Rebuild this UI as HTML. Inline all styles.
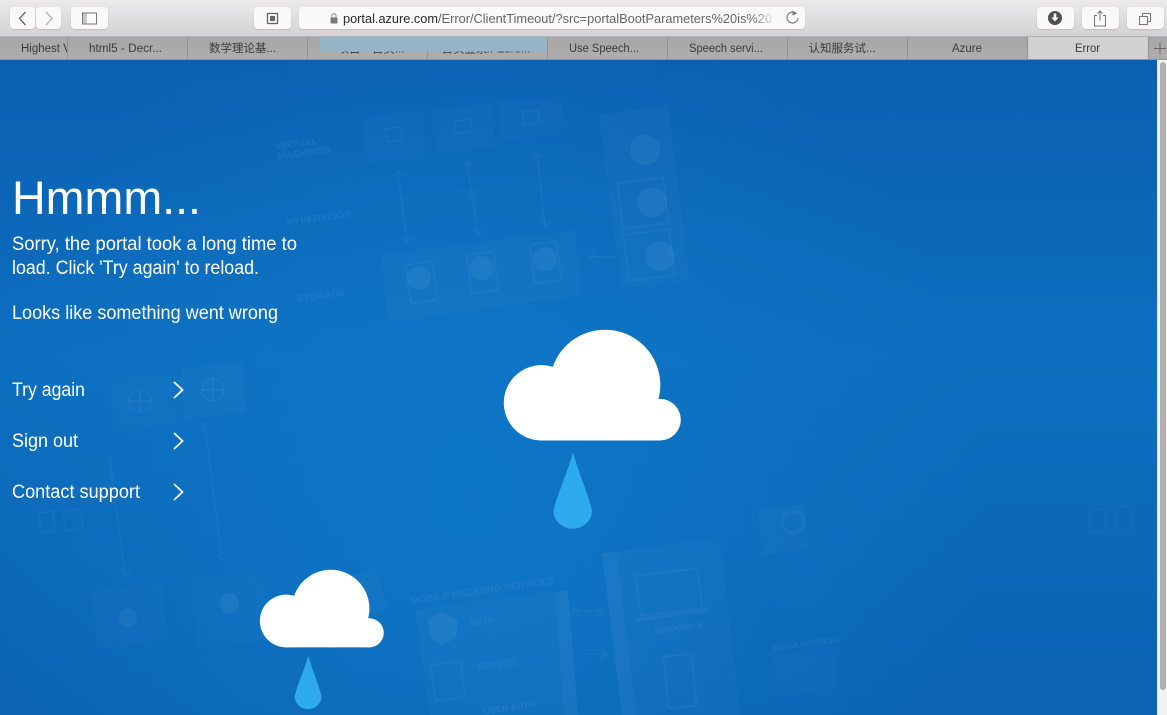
<!DOCTYPE html>
<html lang="en">
<head>
<meta charset="utf-8">
<title>Error</title>
<style>
html,body{margin:0;padding:0;width:1167px;height:715px;overflow:hidden;background:#f1f1f1}
svg{display:block}
text{font-family:"Liberation Sans","Noto Sans CJK SC",sans-serif}
.tab{font-size:11.500px;fill:#3c3c3c;text-anchor:middle}
.main{fill:#fff}
.art text{font-weight:bold;fill:#fff;opacity:.06}
</style>
</head>
<body>
<svg width="1167" height="715" viewBox="0 0 1167 715" xmlns="http://www.w3.org/2000/svg">
<defs>
<linearGradient id="tb" x1="0" y1="0" x2="0" y2="1"><stop offset="0" stop-color="#eceaeb"/><stop offset="1" stop-color="#d3d1d3"/></linearGradient>
<linearGradient id="tabs" x1="0" y1="0" x2="0" y2="1"><stop offset="0" stop-color="#a8a6a7"/><stop offset="1" stop-color="#afadae"/></linearGradient>
<linearGradient id="bg" x1="0" y1="0" x2="0" y2="1"><stop offset="0" stop-color="#0b60b1"/><stop offset=".45" stop-color="#0d6ebf"/><stop offset="1" stop-color="#0b63b3"/></linearGradient>
<radialGradient id="glow" gradientUnits="userSpaceOnUse" cx="470" cy="500" r="520"><stop offset="0" stop-color="#0f78c8" stop-opacity=".9"/><stop offset="1" stop-color="#0f78c8" stop-opacity="0"/></radialGradient>
<linearGradient id="fade" x1="0" y1="0" x2="1" y2="0"><stop offset="0" stop-color="#fafafa" stop-opacity="0"/><stop offset="1" stop-color="#fafafa"/></linearGradient>
<filter id="btn" x="-10%" y="-10%" width="120%" height="130%"><feDropShadow dx="0" dy=".6" stdDeviation=".5" flood-color="#000" flood-opacity=".18"/></filter>
<clipPath id="tab1"><rect x="0" y="37" width="67" height="22"/></clipPath>
<g id="cloud">
<circle cx="541.500" cy="402.800" r="37.700"/>
<circle cx="605" cy="385" r="55.300"/>
<circle cx="660" cy="419.700" r="20.800"/>
<rect x="541.500" y="399" width="118.500" height="41.500"/>
</g>
<path id="drop" d="M573 452C570 466 553.500 504 553.500 512A19.300 18 0 0 0 592 512C592 504 576 466 573 452Z"/>
</defs>

<!-- Toolbar -->
<rect width="1167" height="37" fill="url(#tb)"/>
<rect y="36" width="1167" height="1" fill="#b4b2b3"/>
<g fill="#f9f9f9" filter="url(#btn)">
<rect x="10" y="7" width="25" height="22" rx="4"/>
<rect x="36" y="7" width="25" height="22" rx="4"/>
<rect x="71" y="7" width="37" height="22" rx="4"/>
<rect x="254" y="7" width="37" height="22" rx="4"/>
<rect x="299" y="7" width="506" height="22" rx="4" fill="#fafafa"/>
<rect x="1037" y="7" width="37" height="22" rx="4"/>
<rect x="1082" y="7" width="37" height="22" rx="4"/>
<rect x="1127" y="7" width="37" height="22" rx="4"/>
</g>
<path d="M25.500 12L19.500 18.500L25.500 25" fill="none" stroke="#6a6a6a" stroke-width="1.300"/>
<path d="M46 12L52 18.500L46 25" fill="none" stroke="#b4b4b4" stroke-width="1.300"/>
<rect x="82.500" y="13" width="14" height="11" fill="none" stroke="#777" stroke-width="1"/>
<rect x="83" y="13.500" width="4" height="10" fill="#c8c8c8"/>
<rect x="267.500" y="13.500" width="10" height="10" fill="#fafafa" stroke="#666" stroke-width="1.300"/>
<rect x="270" y="16" width="5" height="5" fill="#666"/>
<rect x="330.500" y="17.500" width="7" height="6" rx=".8" fill="#7a7a7a"/>
<path d="M332 17.500V15.800a2 2 0 0 1 4 0V17.500" fill="none" stroke="#888" stroke-width="1"/>
<text x="343" y="23" font-size="13" fill="#2a2a2a" textLength="95" lengthAdjust="spacingAndGlyphs">portal.azure.com</text>
<text x="438" y="23" font-size="13" fill="#666" textLength="334" lengthAdjust="spacingAndGlyphs">/Error/ClientTimeout/?src=portalBootParameters%20is%20</text>
<rect x="752" y="9" width="24" height="18" fill="url(#fade)"/>
<path d="M796.500 13.700A5.500 5.500 0 1 0 798 18" fill="none" stroke="#777" stroke-width="1.100"/>
<path d="M792.500 10.500L796.800 13.500L792.500 15.800Z" fill="#777"/>
<circle cx="1055" cy="18" r="7" fill="#505050"/>
<path d="M1053.700 13.500h2.600v4h2.300l-3.600 4-3.600-4h2.300Z" fill="#fafafa"/>
<path d="M1097 15.500h-2.500v10.500h11v-10.500h-2.500" fill="none" stroke="#777"/>
<path d="M1100 20.500V11M1097.500 13.500L1100 11L1102.500 13.500" fill="none" stroke="#777"/>
<rect x="1139.500" y="16.500" width="8" height="8" fill="#fafafa" stroke="#777"/>
<path d="M1142.500 16V13.500h8v8H1148" fill="none" stroke="#777"/>

<!-- Tabs -->
<rect y="37" width="1167" height="23" fill="url(#tabs)"/>
<rect x="1027" y="37" width="121" height="22" fill="#d2d0d2"/>
<g fill="#949293">
<rect y="59" width="1167" height="1"/>
<rect x="67" y="37" width="1" height="22"/>
<rect x="187" y="37" width="1" height="22"/>
<rect x="307" y="37" width="1" height="22"/>
<rect x="427" y="37" width="1" height="22"/>
<rect x="547" y="37" width="1" height="22"/>
<rect x="667" y="37" width="1" height="22"/>
<rect x="787" y="37" width="1" height="22"/>
<rect x="907" y="37" width="1" height="22"/>
<rect x="1027" y="37" width="1" height="22"/>
<rect x="1148" y="37" width="1" height="22"/>
</g>
<g clip-path="url(#tab1)"><text x="21" y="52" font-size="11.500" fill="#3c3c3c">Highest Vo</text></g>
<text class="tab" x="125.500" y="52" textLength="73" lengthAdjust="spacingAndGlyphs">html5 - Decr...</text>
<text class="tab" x="242.500" y="52">数学理论基...</text>
<text class="tab" x="371" y="52.500">项目一首页...</text>
<text class="tab" x="486" y="52.500">首页登录/Azure...</text>
<rect x="320" y="37" width="227" height="14.500" fill="#95b5c6"/>
<text class="tab" x="604" y="52" textLength="70" lengthAdjust="spacingAndGlyphs">Use Speech...</text>
<text class="tab" x="726" y="52" textLength="74" lengthAdjust="spacingAndGlyphs">Speech servi...</text>
<text class="tab" x="842" y="52">认知服务试...</text>
<text class="tab" x="967" y="52" textLength="30" lengthAdjust="spacingAndGlyphs">Azure</text>
<text class="tab" x="1087.500" y="52" textLength="25" lengthAdjust="spacingAndGlyphs">Error</text>
<path d="M1154 48.500h12M1160 42.500v12" stroke="#666" stroke-width="1"/>

<!-- Page background -->
<rect y="60" width="1157" height="655" fill="url(#bg)"/>
<rect y="60" width="1157" height="655" fill="url(#glow)"/>

<!-- Faint architecture art -->
<g class="art" fill="#fff" stroke="none">
  <g fill-opacity=".014">
    <path d="M362 117L423 110L426 157L368 163Z"/>
    <path d="M430 110L493 103L495 147L437 153Z"/>
    <path d="M498 102L562 98L562 133L503 140Z"/>
    <path d="M110 378L174 372L176 425L112 430Z"/>
    <path d="M190 578L262 570L270 640L196 650Z"/>
    <path d="M90 590L162 582L168 640L98 650Z"/>
    <path d="M772 655L835 650L838 690L778 695Z"/>
  </g>
  <g fill-opacity=".025">
    <path d="M381 255L575 230L583 295L388 322Z"/>
    <path d="M598 115L668 105L690 282L622 288Z"/>
    <path d="M182 368L242 362L246 412L184 420Z"/>
    <path d="M415 610L555 592L564 715L430 715Z"/>
    <path d="M617 552L720 537L740 715L636 715Z"/>
    <path d="M758 510L805 505L808 550L762 555Z"/>
    <path d="M330 580L375 570L390 610L345 620Z"/>
  </g>
  <path d="M602 553L617 552L636 715H622Z" fill-opacity=".05"/>
  <path d="M555 592L568 590L578 715H564Z" fill-opacity=".05"/>
  <path d="M368 200L578 175L580 190L370 218Z" fill-opacity=".012"/>
  <g fill="none" stroke="#fff" stroke-opacity=".04" stroke-width="2">
    <path d="M398 172L407 243M394 178L398 171L404 177M403 237L407 244L413 238"/>
    <path d="M467 162L478 235M463 168L467 161L473 167M473 229L478 236L484 230"/>
    <path d="M537 153L545 225M533 159L537 152L543 158M540 219L545 226L551 220"/>
    <path d="M205 425L222 560M201 431L205 424L211 430M217 554L222 561L228 555"/>
    <path d="M110 460L125 575M120 568L125 576L131 570"/>
    <path d="M615 257H590M596 251L589 258L596 264"/>
    <path d="M574 611H602M596 605L603 611L596 617M580 605L573 611L580 617"/>
    <path d="M580 654H606M600 648L607 654L600 660"/>
    <rect x="408" y="263" width="27" height="39" rx="2" transform="rotate(-8 421 282)"/>
    <rect x="469" y="253" width="27" height="39" rx="2" transform="rotate(-8 482 272)"/>
    <rect x="532" y="243" width="27" height="39" rx="2" transform="rotate(-8 545 262)"/>
    <rect x="386" y="128" width="16" height="13" transform="rotate(-8 394 134)"/>
    <rect x="455" y="120" width="16" height="13" transform="rotate(-8 463 126)"/>
    <rect x="523" y="111" width="16" height="13" transform="rotate(-8 531 117)"/>
    <circle cx="213" cy="390" r="11"/><path d="M202 390H224M213 379V401"/>
    <circle cx="140" cy="401" r="11"/><path d="M129 401H151M140 390V412"/>
    <rect x="40" y="512" width="14" height="20" rx="2" transform="rotate(-6 47 522)"/>
    <rect x="64" y="510" width="18" height="20" rx="2" transform="rotate(-6 73 520)"/>
    <rect x="638" y="572" width="62" height="40" transform="rotate(-7 669 592)"/>
    <path d="M636 620L708 610" stroke-width="4"/>
    <rect x="666" y="655" width="28" height="52" transform="rotate(-6 680 681)"/>
    <rect x="433" y="663" width="30" height="36" rx="3" transform="rotate(-8 448 681)"/>
    <circle cx="793" cy="522" r="11" stroke-width="3"/>
    <rect x="1090" y="510" width="16" height="22" rx="2" stroke-opacity=".025"/>
    <rect x="1115" y="507" width="18" height="24" rx="2" stroke-opacity=".025"/>
    <rect x="620" y="180" width="46" height="46" rx="1" transform="rotate(-7 643 203)"/>
    <rect x="626" y="232" width="46" height="46" rx="1" transform="rotate(-7 649 255)"/>
  </g>
  <g fill-opacity=".05">
    <circle cx="419" cy="278" r="12"/><circle cx="482" cy="268" r="12"/><circle cx="545" cy="259" r="12"/>
    <circle cx="645" cy="150" r="15"/><circle cx="652" cy="202" r="15"/><circle cx="660" cy="256" r="15"/>
    <circle cx="229" cy="603" r="10"/><circle cx="128" cy="618" r="9"/>
    <path d="M428 620L442 612L458 620L456 638L442 645L430 638Z"/>
  </g>
  <text x="275" y="150" font-size="10" transform="rotate(-8 275 150)">VIRTUAL</text>
  <text x="278" y="160" font-size="10" transform="rotate(-8 278 160)">MACHINES</text>
  <text x="287" y="226" font-size="10" transform="rotate(-8 287 226)">HYPERVISOR</text>
  <text x="297" y="302" font-size="10" transform="rotate(-8 297 302)">STORAGE</text>
  <text x="411" y="604" font-size="10" transform="rotate(-8 411 604)">MOBILE BACKEND SERVICES</text>
  <text x="471" y="626" font-size="9" transform="rotate(-8 471 626)">DATA</text>
  <text x="478" y="670" font-size="9" transform="rotate(-8 478 670)">SCRIPTS</text>
  <text x="484" y="714" font-size="9" transform="rotate(-8 484 714)">USER AUTH</text>
  <text x="655" y="634" font-size="8" transform="rotate(-8 655 634)">WINDOWS 8</text>
  <text x="773" y="651" font-size="8" transform="rotate(-8 773 651)">MEDIA SERVICES</text>
</g>

<!-- Main text -->
<text class="main" x="12" y="214" font-size="47" textLength="189" lengthAdjust="spacingAndGlyphs">Hmmm...</text>
<text class="main" x="12" y="250" font-size="19" textLength="285" lengthAdjust="spacingAndGlyphs">Sorry, the portal took a long time to</text>
<text class="main" x="12" y="274" font-size="19" textLength="247" lengthAdjust="spacingAndGlyphs">load. Click 'Try again' to reload.</text>
<text class="main" x="12" y="319" font-size="19" textLength="266" lengthAdjust="spacingAndGlyphs">Looks like something went wrong</text>
<text class="main" x="12" y="396" font-size="19" textLength="73" lengthAdjust="spacingAndGlyphs">Try again</text>
<text class="main" x="12" y="447" font-size="19" textLength="66" lengthAdjust="spacingAndGlyphs">Sign out</text>
<text class="main" x="12" y="498" font-size="19" textLength="128" lengthAdjust="spacingAndGlyphs">Contact support</text>
<g fill="none" stroke="#fff" stroke-width="1.800">
<path d="M174 382L182.500 390L174 398"/>
<path d="M174 433L182.500 441L174 449"/>
<path d="M174 484L182.500 492L174 500"/>
</g>

<!-- Clouds -->
<use href="#cloud" fill="#fff"/>
<use href="#drop" fill="#2eaaf0"/>
<g transform="translate(260 570) scale(.7) translate(-504 -330)">
<use href="#cloud" fill="#fff"/>
<use href="#drop" fill="#2eaaf0"/>
</g>

<!-- Scrollbar -->
<rect x="1157" y="60" width="10" height="655" fill="#f2f2f2"/>
<rect x="1157" y="60" width="1" height="655" fill="#e4e4e4"/>
<rect x="1160" y="62" width="6" height="628" rx="3" fill="#b0b0b0"/>
</svg>
</body>
</html>
